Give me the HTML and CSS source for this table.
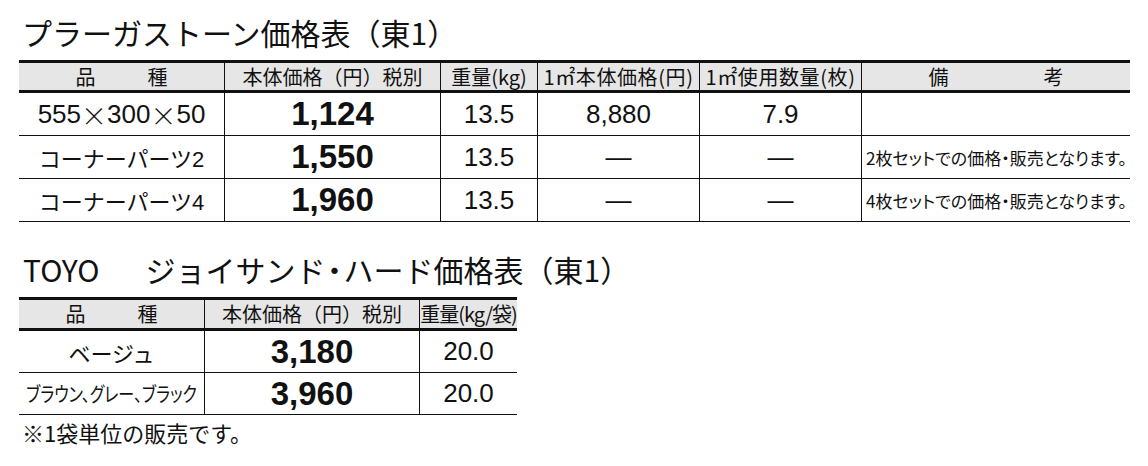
FILE: index.html
```html
<!DOCTYPE html>
<html lang="ja">
<head>
<meta charset="utf-8">
<title>価格表</title>
<link rel="stylesheet" href="styles.css">
</head>
<body>
<div class="page">
  <h1 class="title">プラーガストーン価格表（東1）</h1>
  <div class="grid t1">
    <div class="th"><span class="spread w92"><span>品</span><span>種</span></span></div>
    <div class="th">本体価格（円）税別</div>
    <div class="th">重量(kg)</div>
    <div class="th ls1">1㎡本体価格(円)</div>
    <div class="th ls1">1㎡使用数量(枚)</div>
    <div class="th"><span class="spread w135"><span>備</span><span>考</span></span></div>

    <div class="td name big">555<span class="x">×</span>300<span class="x">×</span>50</div>
    <div class="td price">1,124</div>
    <div class="td num">13.5</div>
    <div class="td num">8,880</div>
    <div class="td num">7.9</div>
    <div class="td note"></div>

    <div class="td name">コーナーパーツ2</div>
    <div class="td price">1,550</div>
    <div class="td num">13.5</div>
    <div class="td num">—</div>
    <div class="td num">—</div>
    <div class="td note">2枚セットでの価格・販売となります。</div>

    <div class="td name">コーナーパーツ4</div>
    <div class="td price">1,960</div>
    <div class="td num">13.5</div>
    <div class="td num">—</div>
    <div class="td num">—</div>
    <div class="td note">4枚セットでの価格・販売となります。</div>
  </div>

  <h2 class="title title2"><span class="brand">TOYO</span>ジョイサン<span class="pdot">ド・</span>ハード価格表（東1）</h2>
  <div class="grid t2">
    <div class="th"><span class="spread w92"><span>品</span><span>種</span></span></div>
    <div class="th">本体価格（円）税別</div>
    <div class="th tight">重量(kg/袋)</div>

    <div class="td name">ベージュ</div>
    <div class="td price">3,180</div>
    <div class="td num">20.0</div>

    <div class="td name small"><span class="cond">ブラウン、グレー、ブラック</span></div>
    <div class="td price">3,960</div>
    <div class="td num">20.0</div>
  </div>
  <p class="foot">※1袋単位の販売です。</p>
</div>
</body>
</html>
```

FILE: styles.css
```css
html, body {
  margin: 0;
  padding: 0;
  background: #ffffff;
}

body {
  font-family: "Liberation Sans", "Noto Sans CJK JP", sans-serif;
  color: #111111;
}

.page {
  padding: 12px 0 0 19px;
}

.title {
  margin: 0 0 8px 3px;
  font-family: "Noto Sans CJK JP", sans-serif;
  font-weight: 400;
  font-size: 30px;
  line-height: 40px;
  white-space: nowrap;
}

.title2 {
  margin-top: 27px;
  margin-left: 4px;
}

.brand {
  margin-right: 46px;
}

.pdot {
  letter-spacing: -6px;
}

.grid {
  display: grid;
}

.t1 {
  grid-template-columns: 205px 216px 97px 162px 162px 269px;
  width: 1111px;
}

.t2 {
  grid-template-columns: 185px 215px 98px;
  width: 498px;
}

.th, .td {
  box-sizing: border-box;
  display: flex;
  align-items: center;
  justify-content: center;
  white-space: nowrap;
  border-left: 1px solid #111111;
}

.t1 > :nth-child(6n+1),
.t2 > :nth-child(3n+1) {
  border-left: none;
}

.th {
  background: #e6e6e6;
  border-top: 3px solid #111111;
  border-bottom: 3px solid #111111;
  font-family: "Noto Sans CJK JP", sans-serif;
  font-size: 20px;
  line-height: 24px;
}

.t1 .th {
  height: 33px;
}

.t2 .th {
  height: 34px;
}

.th.ls1 {
  letter-spacing: 0.6px;
}

.th.tight {
  letter-spacing: -1px;
}

.spread {
  display: inline-flex;
  justify-content: space-between;
}

.w92 {
  width: 92px;
}

.w135 {
  width: 135px;
}

.td {
  border-bottom: 1px solid #111111;
}

.t1 .td {
  height: 43px;
}

.t2 .td {
  height: 42px;
}

.name {
  font-family: "Liberation Sans", "Noto Sans CJK JP", sans-serif;
  font-size: 22px;
}

.name.big {
  font-size: 26px;
}

.x {
  display: inline-block;
  width: 1em;
  text-align: center;
  font-family: "Noto Sans CJK JP", sans-serif;
  font-weight: 300;
}

.name.small {
  font-family: "Noto Sans CJK JP", sans-serif;
  font-size: 20px;
  font-feature-settings: "palt";
}

.cond {
  display: inline-block;
  transform: scaleX(0.8);
  margin: 0 -22px;
}

.price {
  font-weight: 700;
  font-size: 33px;
}

.num {
  font-size: 26px;
}

.note {
  justify-content: flex-start;
  padding-left: 4px;
  font-family: "Noto Sans CJK JP", sans-serif;
  font-size: 17px;
  font-feature-settings: "palt";
}

.foot {
  margin: 4px 0 0 3px;
  font-family: "Noto Sans CJK JP", sans-serif;
  font-size: 22px;
  line-height: 26px;
}
```
